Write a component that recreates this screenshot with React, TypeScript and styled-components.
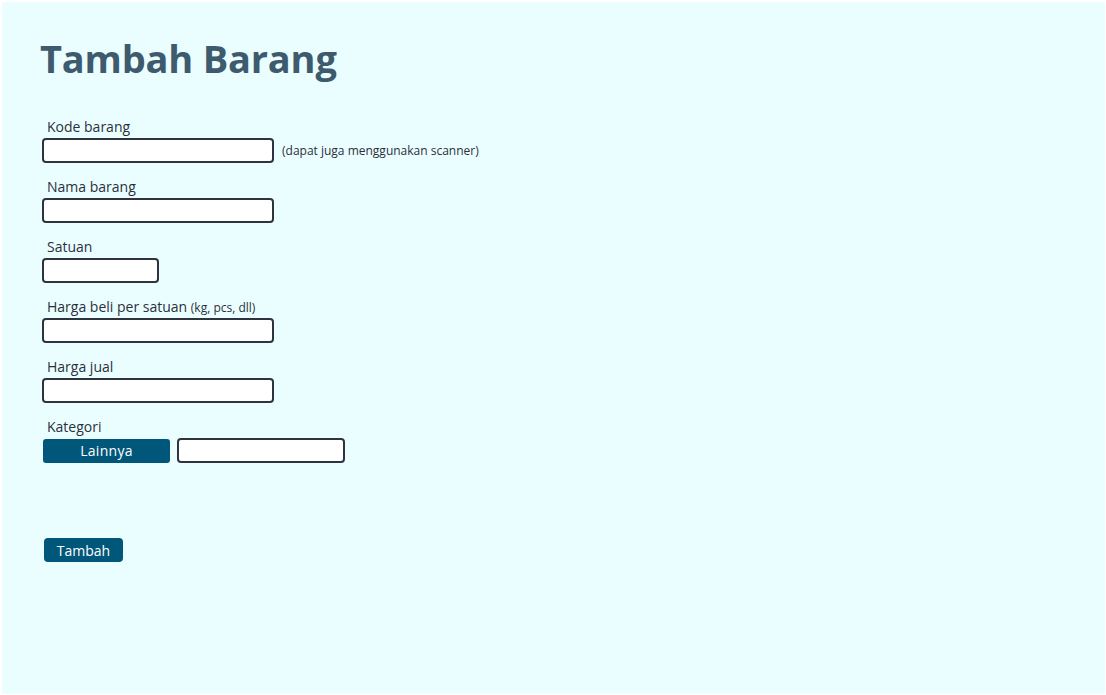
import React from "react";
import styled, { createGlobalStyle } from "styled-components";

const Global = createGlobalStyle`
  html, body { margin: 0; padding: 0; background: #ffffff; }
  body { font-family: "Open Sans", "DejaVu Sans", sans-serif; }
  * { box-sizing: border-box; }
`;

const Page = styled.main`
  margin: 2px 1px 1px 2px;
  min-height: 692px;
  background: #ebfeff;
  padding: 33px 0 0 38px;
`;

const Title = styled.h1`
  margin: 0 0 37px 0;
  font-family: "Open Sans", sans-serif;
  font-weight: 700;
  font-size: 38px;
  line-height: 46px;
  color: #3e5a6d;
  letter-spacing: -0.2px;
`;

const Form = styled.form`
  display: flex;
  flex-direction: column;
  padding-left: 2px;
`;

const Field = styled.div`
  display: flex;
  flex-direction: column;
  margin-bottom: 15px;
`;

const Label = styled.label`
  margin-left: 5px;
  height: 18px;
  font-size: 14px;
  line-height: 18px;
  color: #2a303b;
`;

const Hint = styled.span`
  font-size: 12px;
  color: #2a303b;
`;

const Row = styled.div`
  display: flex;
  align-items: center;
  gap: 8px;
  margin-top: 2px;
`;

const Input = styled.input<{ $w: number }>`
  width: ${(p) => p.$w}px;
  height: 25px;
  border: 2px solid #2d3440;
  border-radius: 4px;
  background: #ffffff;
  padding: 0 6px;
  font-size: 13px;
`;

const Note = styled.span`
  font-size: 12px;
  color: #2a303b;
`;

const CategoryButton = styled.button`
  width: 127px;
  height: 24px;
  margin-left: 1px;
  margin-right: -1px;
  border: none;
  border-radius: 3px;
  background: #00577a;
  color: #ffffff;
  font-family: inherit;
  font-size: 14px;
  letter-spacing: 0.3px;
`;

const SubmitButton = styled.button`
  align-self: flex-start;
  margin: 60px 0 0 2px;
  width: 79px;
  height: 24px;
  border: none;
  border-radius: 4px;
  background: #00577a;
  color: #ffffff;
  font-family: inherit;
  font-size: 14px;
`;

export default function App() {
  return (
    <>
      <Global />
      <Page>
        <Title>Tambah Barang</Title>
        <Form onSubmit={(e) => e.preventDefault()}>
          <Field>
            <Label>Kode barang</Label>
            <Row>
              <Input $w={232} />
              <Note>(dapat juga menggunakan scanner)</Note>
            </Row>
          </Field>
          <Field>
            <Label>Nama barang</Label>
            <Row>
              <Input $w={232} />
            </Row>
          </Field>
          <Field>
            <Label>Satuan</Label>
            <Row>
              <Input $w={117} />
            </Row>
          </Field>
          <Field>
            <Label>
              Harga beli per satuan <Hint>(kg, pcs, dll)</Hint>
            </Label>
            <Row>
              <Input $w={232} />
            </Row>
          </Field>
          <Field>
            <Label>Harga jual</Label>
            <Row>
              <Input $w={232} />
            </Row>
          </Field>
          <Field>
            <Label>Kategori</Label>
            <Row>
              <CategoryButton type="button">Lainnya</CategoryButton>
              <Input $w={168} />
            </Row>
          </Field>
          <SubmitButton type="submit">Tambah</SubmitButton>
        </Form>
      </Page>
    </>
  );
}
